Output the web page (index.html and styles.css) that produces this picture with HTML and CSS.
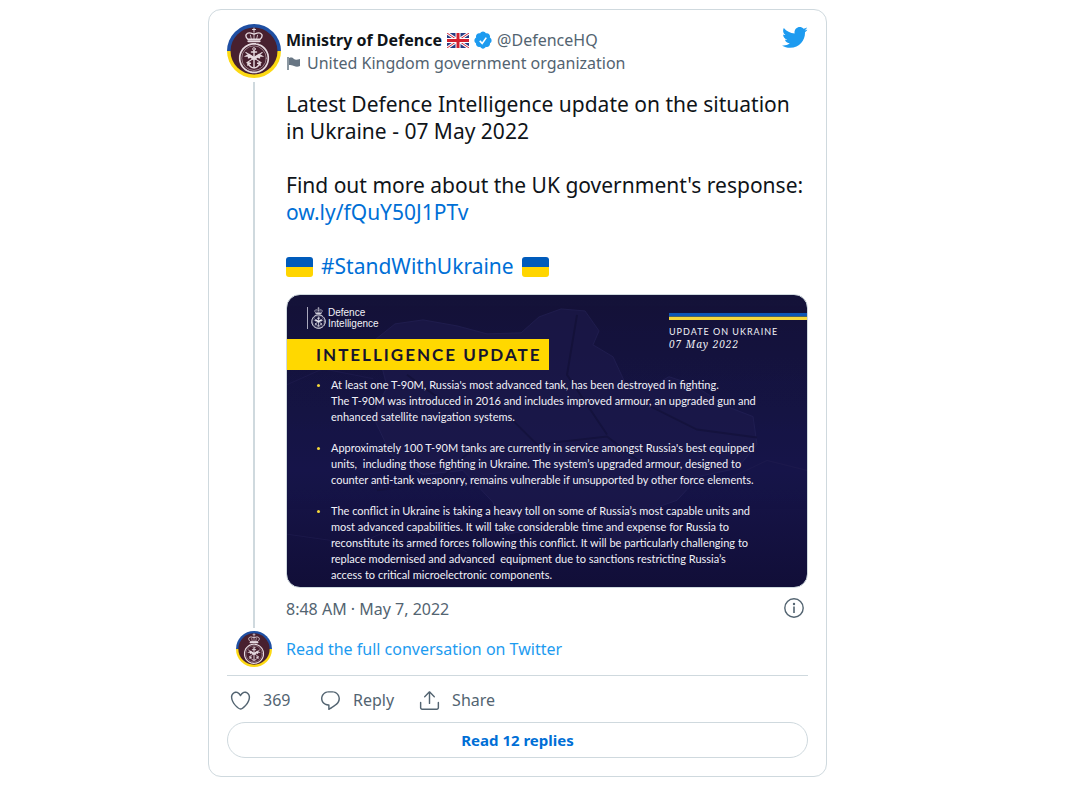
FILE: index.html
```html
<!DOCTYPE html>
<html lang="en">
<head>
    <meta charset="UTF-8">
    <meta name="viewport" content="width=device-width, initial-scale=1.0">
    <title>Ministry of Defence on Twitter</title>
    <link rel="stylesheet" href="styles.css">
</head>
<body>
    <!-- Shared drawings -->
    <svg class="defs" width="0" height="0" aria-hidden="true">
        <symbol id="crest" viewBox="0 0 30 46">
            <g fill="none" stroke="currentColor" stroke-linecap="round" stroke-linejoin="round">
                <path d="M15 1v4M13.500 2.500h3" stroke-width="1"/>
                <path d="M9 12C5 8 8 5 12 6l3 1 3-1c4-1 7 2 3 6z" stroke-width="1.300"/>
                <path d="M15 6v6M11.500 8l1 4M18.500 8l-1 4" stroke-width=".8"/>
                <path d="M9.500 14h11" stroke-width="2"/>
                <circle cx="15" cy="30.500" r="14" stroke-width="1.700" stroke-dasharray="2 .5"/>
                <circle cx="15" cy="30.500" r="12" stroke-width=".5"/>
                <circle cx="15" cy="21.500" r="1.300" stroke-width=".9"/>
                <path d="M15 23v17M12.500 24.500h5" stroke-width="1.400"/>
                <path d="M9.500 35.500c1 3 3.500 4.500 5.500 4.500s4.500-1.500 5.500-4.500M9 37.500v-2.500l2.500.5M21 37.500v-2.500l-2.500.5" stroke-width="1.300"/>
                <path d="M7 25l15 10M23 25L8 35" stroke-width="1"/>
            </g>
            <path d="M5 29l5-3 5 3 5-3 5 3-4 0 0 2-3-1-1 2-2 0-2 0-1-2-3 1 0-2z" fill="currentColor"/>
        </symbol>
        <symbol id="avatar" viewBox="0 0 54 54">
            <path d="M0 27a27 27 0 0 1 54 0z" fill="#1f4fa3"/>
            <path d="M0 27a27 27 0 0 0 54 0z" fill="#fcd913"/>
            <circle cx="27" cy="27" r="23.500" fill="#48202f"/>
            <use href="#crest" x="11.500" y="3" width="31" height="47" color="#e6d9df"/>
        </symbol>
        <symbol id="flag-ua" viewBox="0 0 27 20">
            <path d="M0 10V3a3 3 0 0 1 3-3h21a3 3 0 0 1 3 3v7z" fill="#005bbb"/>
            <path d="M0 10v7a3 3 0 0 0 3 3h21a3 3 0 0 0 3-3v-7z" fill="#ffd500"/>
        </symbol>
    </svg>

    <article class="tweet">
        <div class="thread">
            <div class="rail">
                <svg class="avatar" role="img" aria-label="Ministry of Defence"><use href="#avatar"/></svg>
                <div class="rail-line"></div>
            </div>

            <div class="content">
                <header class="header">
                    <div class="author">
                        <div class="name-row">
                            <a class="name" href="#">Ministry of Defence</a>
                            <svg class="flag-uk" viewBox="0 0 22 15" aria-hidden="true">
                                <rect width="22" height="15" rx="1" fill="#283b82"/>
                                <path d="M0 0l22 15M22 0L0 15" stroke="#fff" stroke-width="3"/>
                                <path d="M0 0l22 15M22 0L0 15" stroke="#d32a3c" stroke-width="1"/>
                                <path d="M11 0v15M0 7.500h22" stroke="#fff" stroke-width="5"/>
                                <path d="M11 0v15M0 7.500h22" stroke="#d3202f" stroke-width="3"/>
                            </svg>
                            <svg class="verified" viewBox="1 1 22 23" aria-hidden="true">
                                <path fill="#1d9bf0" d="M22.500 12.500c0-1.580-.875-2.950-2.148-3.600.154-.435.238-.905.238-1.400 0-2.210-1.710-3.998-3.818-3.998-.47 0-.92.084-1.336.25C14.818 2.415 13.510 1.500 12 1.500s-2.816.917-3.437 2.250c-.415-.165-.866-.25-1.336-.25-2.110 0-3.818 1.790-3.818 4 0 .494.083.964.237 1.400-1.272.65-2.147 2.018-2.147 3.600 0 1.495.782 2.798 1.942 3.486-.02.17-.032.34-.032.514 0 2.210 1.708 4 3.818 4 .47 0 .92-.086 1.335-.25.62 1.334 1.926 2.250 3.437 2.250 1.512 0 2.818-.916 3.437-2.250.415.163.865.248 1.336.248 2.110 0 3.818-1.790 3.818-4 0-.174-.012-.344-.033-.513 1.158-.687 1.943-1.990 1.943-3.484z"/>
                                <path d="M8 13l3 3 5-7" fill="none" stroke="#fff" stroke-width="2"/>
                            </svg>
                            <a class="handle" href="#">@DefenceHQ</a>
                        </div>
                        <div class="label-row">
                            <svg class="org-flag" viewBox="0 0 16 16" aria-hidden="true">
                                <path d="M2 1v13" stroke="#8c98a2" stroke-width="2"/>
                                <path d="M3 2c3-1 4 0 5 1s3 1 6 0v7c-2 1-4 1-6 0s-3-1-5-1z" fill="#687684"/>
                            </svg>
                            <span>United Kingdom government organization</span>
                        </div>
                    </div>
                    <a class="logo" href="#" aria-label="View on Twitter">
                        <svg viewBox="0 0 24 24"><path fill="#1d9bf0" d="M23.643 4.937c-.835.37-1.732.62-2.675.733.962-.576 1.700-1.490 2.048-2.578-.9.534-1.897.922-2.958 1.130-.85-.904-2.060-1.470-3.400-1.470-2.572 0-4.658 2.086-4.658 4.660 0 .364.042.718.12 1.060-3.873-.195-7.304-2.050-9.602-4.868-.4.69-.63 1.490-.63 2.342 0 1.616.823 3.043 2.072 3.878-.764-.025-1.482-.234-2.110-.583v.06c0 2.257 1.605 4.140 3.737 4.568-.392.106-.803.162-1.227.162-.3 0-.593-.028-.877-.082.593 1.850 2.313 3.198 4.352 3.234-1.595 1.250-3.604 1.995-5.786 1.995-.376 0-.747-.022-1.112-.065 2.062 1.323 4.510 2.093 7.140 2.093 8.570 0 13.255-7.098 13.255-13.254 0-.2-.005-.402-.014-.602.91-.658 1.700-1.477 2.323-2.410z"/></svg>
                    </a>
                </header>

                <div class="text">
                    <p>Latest Defence Intelligence update on the situation in Ukraine - 07 May 2022</p>
                    <p>Find out more about the UK government's response: <a href="#">ow.ly/fQuY50J1PTv</a></p>
                    <p class="hashtag">
                        <svg class="flag-ua" aria-hidden="true"><use href="#flag-ua"/></svg>
                        <a href="#">#StandWithUkraine</a>
                        <svg class="flag-ua" aria-hidden="true"><use href="#flag-ua"/></svg>
                    </p>
                </div>

                <!-- Attached update -->
                <section class="media">
                    <svg class="map" viewBox="0 0 520 293" preserveAspectRatio="none" aria-hidden="true">
                        <path d="M88 45l20-16 28-4 34 6 30 8 34-1 18-16 22-8 24 2 14 20-6 14 20 12 12 26 26 4 18-10 24 8 34 22 26 10 4 28-20 24-38 8-22 24-40 14 16 16-30 18-22-14 4-18-46-8-28 22-24 4-14-32-30-32-40 4-32-20-18-38 14-30z" fill="#1d1a4c" stroke="#27245a"/>
                        <path d="M120 80l40 30 50 0 40 40 70-8 44 34M290 20l-10 60 40 60M190 150l-40 38-60 8M350 105l60 30 60 8" fill="none" stroke="#141239" stroke-width="2"/>
                        <path d="M0 90l36-16 50 10M0 240l70 10 50-22 60 30M430 190l50-24 40 10" fill="none" stroke="#201d4f"/>
                    </svg>
                    <div class="media-top">
                        <div class="brand">
                            <svg class="brand-crest" aria-hidden="true"><use href="#crest"/></svg>
                            <span>Defence<br>Intelligence</span>
                        </div>
                        <div class="issue">
                            <div class="stripe"></div>
                            <div class="issue-title">UPDATE ON UKRAINE</div>
                            <div class="issue-date">07 May 2022</div>
                        </div>
                    </div>
                    <h2 class="banner">INTELLIGENCE UPDATE</h2>
                    <ul class="points">
                        <li>At least one T-90M, Russia's most advanced tank, has been destroyed in fighting.<br>
                            The T-90M was introduced in 2016 and includes improved armour, an upgraded gun and<br>
                            enhanced satellite navigation systems.</li>
                        <li>Approximately 100 T-90M tanks are currently in service amongst Russia's best equipped<br>
                            units,&nbsp; including those fighting in Ukraine. The system’s upgraded armour, designed to<br>
                            counter anti-tank weaponry, remains vulnerable if unsupported by other force elements.</li>
                        <li>The conflict in Ukraine is taking a heavy toll on some of Russia’s most capable units and<br>
                            most advanced capabilities. It will take considerable time and expense for Russia to<br>
                            reconstitute its armed forces following this conflict. It will be particularly challenging to<br>
                            replace modernised and advanced&nbsp; equipment due to sanctions restricting Russia’s<br>
                            access to critical microelectronic components.</li>
                    </ul>
                </section>

                <div class="meta">
                    <a href="#">8:48 AM · May 7, 2022</a>
                    <button class="info" type="button" aria-label="Twitter Ads info and privacy">
                        <svg viewBox="0 0 20 20">
                            <circle cx="10" cy="10" r="9.200" fill="none" stroke="#536471" stroke-width="1.400"/>
                            <path d="M10 8.500V15" stroke="#536471" stroke-width="1.600"/>
                            <circle cx="10" cy="6" r="1.200" fill="#536471"/>
                        </svg>
                    </button>
                </div>
            </div>
        </div>

        <div class="conversation">
            <svg class="avatar-small" aria-hidden="true"><use href="#avatar"/></svg>
            <a href="#">Read the full conversation on Twitter</a>
        </div>

        <div class="actions">
            <button class="like" type="button" aria-label="Like, 369">
                <svg viewBox="0 0 24 24"><path d="M12 21.638h-.014C9.403 21.590 1.950 14.856 1.950 8.478c0-3.064 2.525-5.754 5.403-5.754 2.290 0 3.830 1.580 4.646 2.730.814-1.148 2.354-2.730 4.645-2.730 2.880 0 5.404 2.690 5.404 5.755 0 6.376-7.454 13.110-10.037 13.157H12zM7.354 4.225c-2.080 0-3.903 1.988-3.903 4.255 0 5.740 7.034 11.596 8.550 11.658 1.518-.062 8.550-5.917 8.550-11.658 0-2.267-1.823-4.255-3.903-4.255-2.528 0-3.940 2.936-3.952 2.965-.23.562-1.156.562-1.387 0-.014-.03-1.425-2.965-3.954-2.965z"/></svg>
                369
            </button>
            <button type="button">
                <svg viewBox="0 0 24 24"><path d="M14.046 2.242l-4.148-.01h-.002c-4.374 0-7.800 3.427-7.800 7.802 0 4.098 3.186 7.206 7.465 7.370v3.828c0 .108.044.286.12.403.142.225.384.347.632.347.138 0 .277-.038.402-.118.264-.168 6.473-4.140 8.088-5.506 1.902-1.610 3.040-3.970 3.043-6.312v-.017c-.006-4.367-3.430-7.787-7.800-7.788zm3.787 12.972c-1.134.96-4.862 3.405-6.772 4.643V16.670c0-.414-.335-.75-.75-.75h-.396c-3.660 0-6.318-2.476-6.318-5.886 0-3.534 2.768-6.302 6.300-6.302l4.147.01h.002c3.532 0 6.300 2.766 6.302 6.296-.003 1.910-.942 3.844-2.514 5.176z"/></svg>
                Reply
            </button>
            <button type="button">
                <svg viewBox="0 0 24 24"><path d="M17.530 7.470l-5-5c-.293-.293-.768-.293-1.060 0l-5 5c-.294.293-.294.768 0 1.060s.767.294 1.060 0l3.720-3.720V15c0 .414.336.75.75.75s.75-.336.75-.75V4.810l3.720 3.720c.146.147.338.22.53.22s.384-.072.53-.22c.293-.293.293-.767 0-1.060z"/><path d="M19.708 21.944H4.292C3.028 21.944 2 20.916 2 19.652V14c0-.414.336-.75.75-.75s.75.336.75.75v5.652c0 .437.355.792.792.792h15.416c.437 0 .792-.355.792-.792V14c0-.414.336-.75.75-.75s.75.336.75.75v5.652c0 1.264-1.028 2.292-2.292 2.292z"/></svg>
                Share
            </button>
        </div>

        <a class="replies" href="#">Read 12 replies</a>
    </article>
</body>
</html>
```

FILE: styles.css
```css
/* General Styling */
* {
    margin: 0;
    padding: 0;
    box-sizing: border-box;
}

body {
    padding: 9px 36px 9px 0;
    font-family: 'Noto Sans', 'Open Sans', sans-serif;
    font-size: 16px;
    line-height: 23px;
    color: #0f1419;
    background: #fff;
}

a {
    color: #006fd6;
    text-decoration: none;
}

a:hover {
    text-decoration: underline;
}

svg {
    display: block;
    flex: none;
}

button {
    font: inherit;
    color: inherit;
    background: none;
    border: none;
    cursor: pointer;
}

.defs {
    position: absolute;
}

/* Card */
.tweet {
    max-width: 619px;
    margin: 0 auto;
    padding: 14px 18px 18px;
    border: 1px solid #cfd9de;
    border-radius: 13px;
}

.thread {
    display: grid;
    grid-template-columns: 54px 1fr;
    gap: 5px;
}

.rail {
    display: flex;
    flex-direction: column;
    align-items: center;
    gap: 4px;
}

.avatar {
    width: 54px;
    height: 54px;
}

.rail-line {
    flex: 1;
    width: 2px;
    background: #cfd9de;
}

.content {
    min-width: 0;
}

/* Author */
.header {
    display: flex;
    align-items: flex-start;
    justify-content: space-between;
}

.author {
    padding-top: 5px;
}

.name-row,
.label-row {
    display: flex;
    align-items: center;
    gap: 5px;
    color: #536471;
}

.name {
    font-weight: 700;
    color: #0f1419;
}

.handle {
    color: #536471;
}

.flag-uk {
    width: 22px;
    height: 15px;
}

.verified {
    width: 18px;
    height: 19px;
}

.org-flag {
    width: 16px;
    height: 16px;
}

.logo svg {
    width: 27px;
    height: 27px;
}

/* Tweet text */
.text {
    display: flex;
    flex-direction: column;
    gap: 27px;
    padding: 16px 0 14px;
    font-size: 21px;
    line-height: 27px;
}

.hashtag {
    display: flex;
    align-items: center;
    gap: 8px;
}

.flag-ua {
    width: 27px;
    height: 20px;
}

/* Attached update */
.media {
    position: relative;
    overflow: hidden;
    min-height: 293px;
    padding-bottom: 4px;
    border: 1px solid #cfd9de;
    border-radius: 14px;
    background: linear-gradient(#141238, #17154a 60%, #110e38);
    color: #f1f1f7;
    font-family: Lato, sans-serif;
}

.map {
    position: absolute;
    inset: 0;
    width: 100%;
    height: 100%;
    opacity: 0.6;
}

.media-top,
.banner,
.points {
    position: relative;
}

.media-top {
    display: flex;
    justify-content: space-between;
    height: 44px;
}

.brand {
    display: flex;
    align-items: center;
    align-self: flex-start;
    gap: 2px;
    margin: 12px 0 0 20px;
    padding-left: 3px;
    border-left: 1px solid #a9a8bd;
    font-family: 'Liberation Sans', sans-serif;
    font-size: 10px;
    line-height: 11px;
}

.brand-crest {
    width: 15px;
    height: 22px;
}

.issue {
    width: 138px;
    padding-top: 18px;
}

.stripe {
    height: 7px;
    border-top: 3px solid #0d57b5;
    border-bottom: 3px solid #f5d83a;
    background: #4b6266;
}

.issue-title {
    padding-top: 6px;
    font-size: 9px;
    line-height: 12px;
    letter-spacing: 1px;
}

.issue-date {
    font-family: 'Noto Serif', 'Liberation Serif', serif;
    font-size: 10px;
    line-height: 12px;
    font-style: italic;
    letter-spacing: 1px;
}

.banner {
    width: 262px;
    padding-left: 29px;
    background: #ffd800;
    color: #16142e;
    font-size: 17px;
    font-weight: 700;
    line-height: 31px;
    letter-spacing: 2px;
    white-space: nowrap;
}

.points {
    display: flex;
    flex-direction: column;
    gap: 15px;
    padding: 7px 0 0 44px;
    list-style: none;
    font-size: 11px;
    line-height: 16px;
    white-space: nowrap;
}

.points li::before {
    content: '';
    float: left;
    width: 3px;
    height: 3px;
    margin: 7px 0 0 -14px;
    border-radius: 50%;
    background: #f5d83a;
}

/* Time and info */
.meta {
    display: flex;
    align-items: flex-start;
    justify-content: space-between;
    padding: 10px 4px 7px 0;
}

.meta a {
    color: #536471;
}

.info svg {
    width: 20px;
    height: 20px;
}

.conversation {
    display: flex;
    align-items: center;
    gap: 14px;
    padding: 3px 0 8px 9px;
}

.conversation a {
    color: #1d9bf0;
}

.avatar-small {
    width: 36px;
    height: 36px;
}

/* Actions */
.actions {
    display: flex;
    gap: 24px;
    padding: 13px 2px 10px;
    border-top: 1px solid #cfd9de;
}

.actions button {
    display: flex;
    align-items: center;
    gap: 11px;
    color: #536471;
}

.actions .like {
    min-width: 66px;
}

.actions svg {
    width: 23px;
    height: 23px;
    fill: currentColor;
}

.replies {
    display: block;
    border: 1px solid #cfd9de;
    border-radius: 18px;
    font-size: 15px;
    font-weight: 700;
    line-height: 34px;
    text-align: center;
}
```
